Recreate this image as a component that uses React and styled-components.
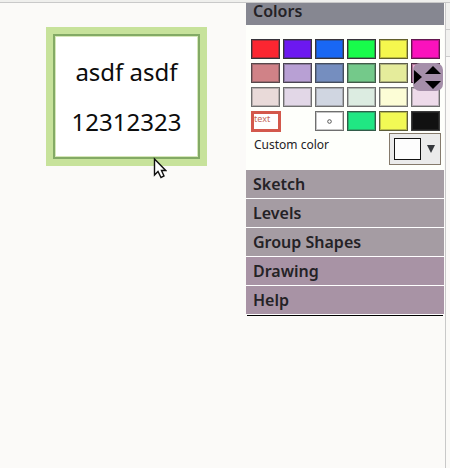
import React, { useState } from 'react';
import styled, { createGlobalStyle } from 'styled-components';

const GlobalStyle = createGlobalStyle`
  *, *::before, *::after { box-sizing: border-box; }
  body {
    margin: 0;
    background: #fbfaf8;
    color: #242226;
    font-family: "Noto Sans", "Open Sans", sans-serif;
  }
  button { font: inherit; color: inherit; }
`;

const Page = styled.div`
  display: flex;
  flex-direction: column;
  min-height: 100vh;
`;

const TopEdge = styled.header`
  flex: none;
  height: 3px;
  background: #efefed;
  border-bottom: 1px solid #c9c9c9;
`;

const Workspace = styled.div`
  flex: 1;
  display: flex;
`;

const Canvas = styled.main`
  flex: 1;
  min-width: 0;
  padding: 24px 39px 0 46px;
`;

const Shape = styled.section`
  position: relative;
  background: #fff;
  border: 7px solid #c7e29b;
`;

const ShapeBody = styled.div`
  display: flex;
  flex-direction: column;
  align-items: center;
  justify-content: center;
  gap: 16px;
  height: 125px;
  padding-top: 1px;
  border: 2px solid #83aa65;
  outline: 1px solid #d6e8b9;
  outline-offset: -3px;
`;

const ShapeLine = styled.p`
  margin: 0;
  font-size: 24px;
  line-height: 34px;
  color: #0c0c0c;
`;

const Pointer = styled.svg`
  position: absolute;
  left: 100px;
  top: 123px;
  width: 14px;
  height: 22px;
`;

const Sidebar = styled.aside`
  flex: none;
  width: 198px;
  margin-right: 1px;
`;

const SectionHeader = styled.button`
  display: flex;
  align-items: center;
  width: 100%;
  height: ${(p) => (p.$compact ? '22px' : '28px')};
  padding: 0 7px ${(p) => (p.$compact ? '6px' : '0')};
  border: 0;
  text-align: left;
  font-size: 16px;
  font-weight: 600;
  line-height: 16px;
  background: ${(p) => p.$tone};
`;

const ColorPanel = styled.div`
  position: relative;
  height: 145px;
  padding: 14px 3px 0 5px;
  background: #fefffb;
`;

const Swatches = styled.div`
  display: grid;
  grid-template-columns: repeat(6, 29px);
  grid-auto-rows: 20px;
  gap: 4px 3px;
`;

const Swatch = styled.button`
  display: flex;
  align-items: center;
  justify-content: center;
  padding: 0;
  border: 1px solid ${(p) => p.$edge};
  box-shadow: inset 0 0 0 1px ${(p) => p.$edge}66;
  background: ${(p) => p.$fill};
`;

const TextSwatch = styled.button`
  display: flex;
  width: 30px;
  height: 21px;
  padding: 0;
  border: 3px solid #d3584c;
  background: #fff;
  color: #c5695c;
  font-size: 9px;
  line-height: 9px;
`;

const CustomRow = styled.div`
  display: flex;
  justify-content: space-between;
  padding: 2px 0 0 3px;
`;

const CustomLabel = styled.label`
  font-size: 12px;
  line-height: 24px;
`;

const Picker = styled.button`
  display: flex;
  align-items: center;
  justify-content: space-between;
  width: 52px;
  height: 32px;
  padding: 0 5px 0 4px;
  border: 1px solid #857a6b;
  background: #ebebeb;
`;

const PickerColor = styled.span`
  width: 27px;
  height: 22px;
  border: 1px solid #141414;
  background: #fdfdfd;
`;

const Knob = styled.div`
  position: absolute;
  right: 1px;
  top: 38px;
  width: 30px;
  height: 28px;
  border-radius: 7px;
  background: #a58fa9;

  svg { display: block; }
`;

const Sections = styled.nav`
  display: grid;
  gap: 1px;
  padding-bottom: 1px;
  background: #fff;
`;

const EndRule = styled.hr`
  height: 1px;
  margin: 0 1px;
  border: 0;
  background: #000;
`;

const Rail = styled.div`
  flex: none;
  width: 5px;
  border-left: 1px solid #c9c9c9;
`;

const RailTab = styled.div`
  height: 27px;
  background: #f1f1ef;
  border-bottom: 1px solid #cccccc;
`;

const dark = '#37343a';
const soft = '#6f6f6f';

const palette = [
  ['Red', '#fb2631', dark], ['Violet', '#6c18f0', dark], ['Blue', '#1967f4', dark],
  ['Green', '#18fb4b', dark], ['Yellow', '#f5f74e', '#625f2c'], ['Magenta', '#fa12bd', '#63174f'],
  ['Dusty red', '#d08287', '#57474a'], ['Lavender', '#b8a0d4', '#4a4452'], ['Slate blue', '#758ebf', '#444d5d'],
  ['Sage', '#74c98a', '#415a48'], ['Straw', '#e5ec9b', '#5e5e4c'], ['Mauve', '#eda9d1', '#4c2e44'],
  ['Pale rose', '#e9dad9', soft], ['Pale lavender', '#e2d7e7', soft], ['Pale blue', '#d0d6e1', soft],
  ['Pale green', '#dcece1', soft], ['Cream', '#fcfdd6', soft], ['Pale pink', '#eedbea', soft],
];

const tail = [
  ['Emerald', '#20e783', '#315c49'],
  ['Lemon', '#f2f955', '#5e5e37'],
  ['Black', '#111111', '#3b3b3b'],
];

const sections = [
  ['Sketch', '#a59ca3'],
  ['Levels', '#a59ca3'],
  ['Group Shapes', '#a59ca3'],
  ['Drawing', '#a893a5'],
  ['Help', '#a893a5'],
];

function ColorSwatch({ color, onPick, children }) {
  const [name, fill, edge] = color;
  return (
    <Swatch type="button" aria-label={name} $fill={fill} $edge={edge} onClick={() => onPick(name)}>
      {children}
    </Swatch>
  );
}

export default function App() {
  const [, setPicked] = useState('Text');
  return (
    <>
      <GlobalStyle />
      <Page>
        <TopEdge />
        <Workspace>
          <Canvas>
            <Shape>
              <ShapeBody>
                <ShapeLine>asdf asdf</ShapeLine>
                <ShapeLine>12312323</ShapeLine>
              </ShapeBody>
              <Pointer viewBox="0 0 14 22" aria-hidden="true">
                <path
                  d="M1.5 2V18L5 14.5L8 20.5L11 19L8.5 13.5H12.7Z"
                  fill="#fff"
                  stroke="#111"
                  strokeWidth="1.4"
                />
              </Pointer>
            </Shape>
          </Canvas>
          <Sidebar>
            <SectionHeader type="button" aria-expanded="true" $compact $tone="#868791">Colors</SectionHeader>
            <ColorPanel>
              <Swatches>
                {palette.map((c) => <ColorSwatch key={c[0]} color={c} onPick={setPicked} />)}
                <TextSwatch type="button" onClick={() => setPicked('Text')}>text</TextSwatch>
                <span />
                <ColorSwatch color={['No fill', '#ffffff', soft]} onPick={setPicked}>
                  <svg width="7" height="7" viewBox="0 0 7 7" aria-hidden="true">
                    <circle cx="3.5" cy="3.5" r="1.8" fill="none" stroke="#555" />
                  </svg>
                </ColorSwatch>
                {tail.map((c) => <ColorSwatch key={c[0]} color={c} onPick={setPicked} />)}
              </Swatches>
              <CustomRow>
                <CustomLabel htmlFor="custom-color">Custom color</CustomLabel>
                <Picker type="button" id="custom-color">
                  <PickerColor />
                  <svg width="8" height="8" viewBox="0 0 8 8" aria-hidden="true">
                    <path d="M0 0H8L4 8Z" fill="#35383d" />
                  </svg>
                </Picker>
              </CustomRow>
              <Knob>
                <svg width="30" height="28" viewBox="0 0 30 28" aria-hidden="true">
                  <path d="M1 7L9 14L1 21ZM12 11L20 3L28 11ZM12 18H28L20 26Z" fill="#000" />
                </svg>
              </Knob>
            </ColorPanel>
            <Sections>
              {sections.map(([name, tone]) => (
                <SectionHeader key={name} type="button" aria-expanded="false" $tone={tone}>
                  {name}
                </SectionHeader>
              ))}
            </Sections>
            <EndRule />
          </Sidebar>
          <Rail>
            <RailTab />
            <RailTab />
          </Rail>
        </Workspace>
      </Page>
    </>
  );
}
